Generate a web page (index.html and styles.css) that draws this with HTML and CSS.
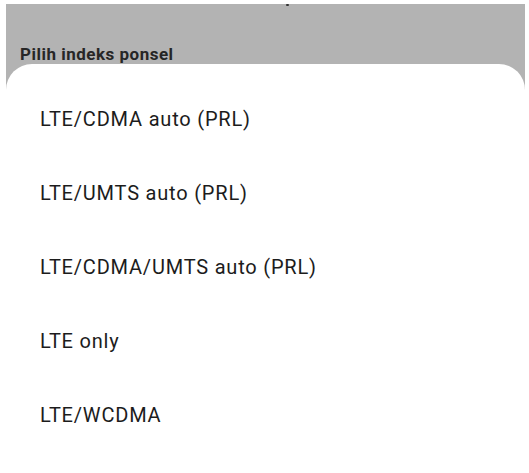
FILE: index.html
```html
<!DOCTYPE html>
<html lang="id">
<head>
<meta charset="utf-8">
<link rel="stylesheet" href="styles.css">
</head>
<body>
<div class="screen">
  <div class="backdrop">
    <span class="crumb"></span>
    <div class="header">Pilih indeks ponsel</div>
    <div class="sheet">
      <div class="item">LTE/CDMA auto (PRL)</div>
      <div class="item">LTE/UMTS auto (PRL)</div>
      <div class="item">LTE/CDMA/UMTS auto (PRL)</div>
      <div class="item">LTE only</div>
      <div class="item">LTE/WCDMA</div>
    </div>
  </div>
</div>
</body>
</html>
```

FILE: styles.css
```css
html, body {
  margin: 0;
  padding: 0;
  background: #ffffff;
}
body {
  font-family: Roboto, "Liberation Sans", sans-serif;
  width: 529px;
  height: 473px;
  overflow: hidden;
}
.screen {
  padding: 4px 4px 0 6px;
}
.backdrop {
  position: relative;
  background: #b3b3b3;
}
.crumb {
  position: absolute;
  left: 280px;
  top: 0;
  width: 3px;
  height: 2px;
  background: #333;
  border-radius: 1px;
}
.header {
  padding: 40px 0 0 14px;
  font-size: 17px;
  line-height: 20px;
  font-weight: 700;
  letter-spacing: 0.5px;
  color: #262626;
}
.sheet {
  background: #ffffff;
  border-radius: 26px 26px 0 0;
  padding-top: 18px;
  height: 391px;
}
.item {
  padding-left: 34px;
  font-size: 20px;
  line-height: 74px;
  letter-spacing: 0.8px;
  color: #1c1c1c;
}
```
